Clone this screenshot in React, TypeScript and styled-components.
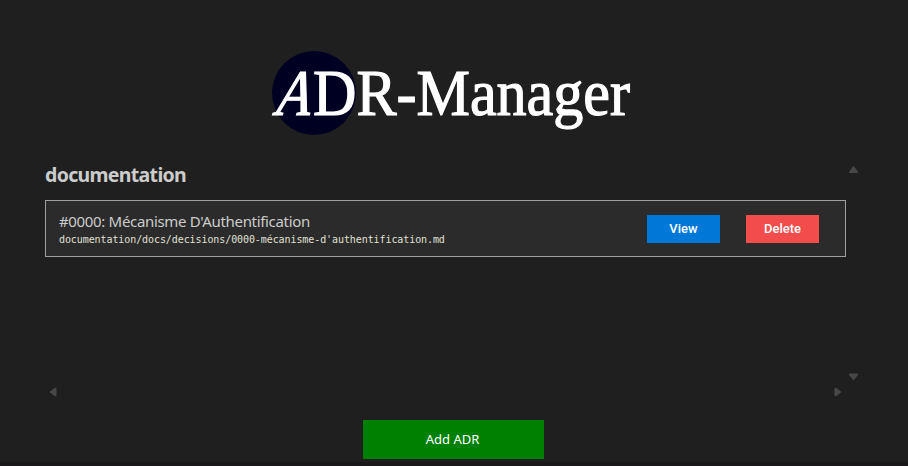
import React from "react";
import styled, { createGlobalStyle } from "styled-components";

const GlobalStyle = createGlobalStyle`
  * { box-sizing: border-box; }
  body { margin: 0; background: #1f1f1f; overflow: hidden; }
`;

const Page = styled.main`
  display: flex;
  flex-direction: column;
  height: 466px;
  padding-top: 36px;
  background: #1f1f1f;
  border-bottom: 4px solid #1b181b;
  color: #cccccc;
  font-family: "Noto Sans", sans-serif;
`;

const Logo = styled.svg`
  display: block;
  flex: none;
  width: 380px;
  height: 114px;
  margin-left: 262px;
  overflow: visible;
  font-family: "Liberation Serif", serif;
  font-size: 65px;
`;

const ScrollArea = styled.section`
  display: grid;
  grid-template-columns: 801px 15px;
  grid-template-rows: 222px 15px;
  margin: 12px 0 0 45px;
`;

const List = styled.div`
  display: flex;
  flex-direction: column;
`;

const Track = styled.div<{ $vertical?: boolean }>`
  display: flex;
  flex-direction: ${(p) => (p.$vertical ? "column" : "row")};
  justify-content: space-between;
  align-items: center;
  padding: ${(p) => (p.$vertical ? "4px 0 3px" : "1px 4px 0")};
  svg { display: block; fill: #484848; }
`;

const Heading = styled.h2`
  margin: 0;
  height: 38px;
  line-height: 26px;
  font-size: 19.5px;
  font-weight: 700;
  letter-spacing: -0.68px;
`;

const Card = styled.article`
  display: flex;
  align-items: center;
  height: 57px;
  padding: 0 26px 0 13px;
  border: 1px solid #a0a0a0;
  background: #2b2b2b;
`;

const Info = styled.div`
  flex: 1;
  padding-top: 2px;
`;

const Title = styled.div`
  height: 21px;
  line-height: 19px;
  font-size: 15px;
  letter-spacing: -0.33px;
`;

const Path = styled.div`
  height: 14px;
  line-height: 14px;
  font-family: "DejaVu Sans Mono", monospace;
  font-size: 10px;
  letter-spacing: -0.085px;
  color: #e0e0d6;
`;

const Actions = styled.div`
  display: flex;
  gap: 26px;
`;

const Button = styled.button<{ $color: string }>`
  width: 73px;
  height: 28px;
  padding: 0;
  border: 0;
  background: ${(p) => p.$color};
  color: #fff;
  font: 500 13px/28px Roboto, sans-serif;
`;

const AddButton = styled(Button)`
  flex: none;
  width: 181px;
  height: 39px;
  margin: 21px 0 0 363px;
  padding-right: 2px;
  font: 400 13px/39px "Noto Sans", sans-serif;
`;

const arrows = {
  up: "M4.5 0 8.7 5.2Q9.5 7 8 7H1Q-.5 7 .3 5.2Z",
  down: "M4.5 7.5 8.7 2.3Q9.5 .5 8 .5H1Q-.5 .5 .3 2.3Z",
  left: "M.5 5 5.5 1Q7.5 0 7.5 2V8Q7.5 10 5.5 9Z",
  right: "M7.5 5 2.5 1Q.5 0 .5 2V8Q.5 10 2.5 9Z",
};

function Arrow({ direction }: { direction: keyof typeof arrows }) {
  const vertical = direction === "up" || direction === "down";
  return (
    <svg width={vertical ? 9 : 8} height={vertical ? 8 : 10}>
      <path d={arrows[direction]} />
    </svg>
  );
}

export default function App() {
  return (
    <>
      <GlobalStyle />
      <Page>
        <Logo viewBox="262 36 380 114">
          <circle cx="314" cy="93" r="42" fill="#000023" />
          <g fill="#fff" stroke="#fff" strokeWidth="1.2">
            <text transform="translate(275.5 115.3) skewX(-8)" fontStyle="italic" textLength="34" lengthAdjust="spacingAndGlyphs">A</text>
            <text x="313" y="115.3" textLength="317" lengthAdjust="spacingAndGlyphs">DR-Manager</text>
          </g>
        </Logo>
        <ScrollArea>
          <List>
            <Heading>documentation</Heading>
            <Card>
              <Info>
                <Title>#0000: Mécanisme D'Authentification</Title>
                <Path>documentation/docs/decisions/0000-mécanisme-d'authentification.md</Path>
              </Info>
              <Actions>
                <Button $color="#0078d7">View</Button>
                <Button $color="#f24c4c">Delete</Button>
              </Actions>
            </Card>
          </List>
          <Track $vertical>
            <Arrow direction="up" />
            <Arrow direction="down" />
          </Track>
          <Track>
            <Arrow direction="left" />
            <Arrow direction="right" />
          </Track>
        </ScrollArea>
        <AddButton $color="#008000">Add ADR</AddButton>
      </Page>
    </>
  );
}
